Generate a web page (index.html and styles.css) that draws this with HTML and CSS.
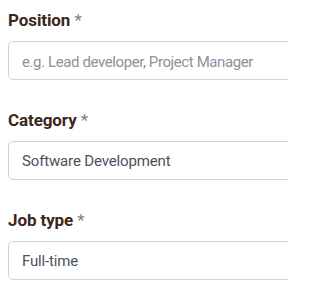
FILE: index.html
```html
<!DOCTYPE html>
<html>
<head>
<meta charset="utf-8">
<link rel="stylesheet" href="styles.css">
</head>
<body>
<div class="page">
<form class="form">
  <div class="field">
    <label class="label">Position <span class="req">*</span></label>
    <input class="input" type="text" placeholder="e.g. Lead developer, Project Manager">
  </div>
  <div class="field">
    <label class="label">Category <span class="req">*</span></label>
    <div class="input select">Software Development</div>
  </div>
  <div class="field">
    <label class="label">Job type <span class="req">*</span></label>
    <div class="input select">Full-time</div>
  </div>
</form>
</div>
</body>
</html>
```
FILE: styles.css
```css
html, body {
  margin: 0;
  padding: 0;
  background: #ffffff;
}
.page {
  width: 288px;
  height: 288px;
  overflow: hidden;
  box-sizing: border-box;
  padding: 8px 0 0 8px;
  font-family: Roboto, "Noto Sans", sans-serif;
}
.form {
  width: 320px;
}
.field {
  margin-bottom: 28px;
}
.label {
  display: block;
  font-size: 17px;
  line-height: 24px;
  font-weight: 700;
  color: #3b2719;
  margin-bottom: 9px;
  letter-spacing: -0.1px;
}
.req {
  font-weight: 400;
  color: #8b7f78;
}
.input {
  box-sizing: border-box;
  display: block;
  width: 100%;
  height: 39px;
  border: 1px solid #d2d2d6;
  border-radius: 5px;
  padding: 2px 13px 0;
  font-family: inherit;
  font-size: 15px;
  line-height: 35px;
  letter-spacing: -0.15px;
  color: #4d4f5d;
  background: #fff;
  outline: none;
}
.input::placeholder {
  color: #8c919c;
  letter-spacing: -0.4px;
}
```
